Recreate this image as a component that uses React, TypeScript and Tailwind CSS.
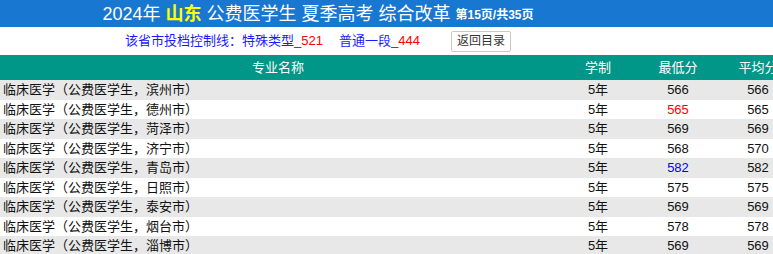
import React from 'react';

const rows = [
    { city: '滨州市', min: '566', avg: '566' },
    { city: '德州市', min: '565', avg: '565', minColor: 'text-[#ff0000]' },
    { city: '菏泽市', min: '569', avg: '569' },
    { city: '济宁市', min: '568', avg: '570' },
    { city: '青岛市', min: '582', avg: '582', minColor: 'text-[#0000ff]' },
    { city: '日照市', min: '575', avg: '575' },
    { city: '泰安市', min: '569', avg: '569' },
    { city: '烟台市', min: '578', avg: '578' },
    { city: '淄博市', min: '569', avg: '569' },
];

export default function App() {
    return (
        <div
            className="w-[773px] h-[254px] overflow-hidden bg-white text-[13px] text-[#111]"
            style={{ fontFamily: '"Liberation Sans", "Noto Sans CJK SC", sans-serif' }}
        >
            {/* title bar */}
            <div className="h-[27px] bg-[#1877d1]">
                <div className="w-[636px] h-full flex items-center justify-center text-white">
                    <span className="text-[18px] leading-none">
                        2024年 <b className="text-[#ffff00]">山东</b> 公费医学生 夏季高考 综合改革
                    </span>
                    <span className="ml-[5px] text-[12px] font-bold leading-none mt-[2px]">第15页/共35页</span>
                </div>
            </div>

            {/* control line */}
            <div className="h-[28px] w-[636px] flex items-center justify-center text-[#1a1aff]">
                <span>
                    该省市投档控制线：特殊类型_<span className="text-[#ff0000]">521</span>
                    <span className="inline-block w-[16px]"></span>
                    普通一段_<span className="text-[#ff0000]">444</span>
                </span>
                <button className="ml-[31px] w-[60px] h-[21px] border border-[#c8c8c8] rounded-[2px] bg-white text-[12px] text-[#333] leading-none">
                    返回目录
                </button>
            </div>

            {/* table */}
            <div className="w-[800px]">
                <div className="h-[25px] bg-[#009688] text-white flex items-center">
                    <div className="w-[556px] text-center">专业名称</div>
                    <div className="w-[84px] text-center">学制</div>
                    <div className="w-[76px] text-center">最低分</div>
                    <div className="w-[84px] text-center">平均分</div>
                </div>
                {rows.map((r, i) => (
                    <div
                        key={r.city}
                        className={`h-[19.5px] flex items-center ${i % 2 === 0 ? 'bg-[#e8e8e8]' : 'bg-white'}`}
                    >
                        <div className="w-[556px] pl-[3px]">临床医学（公费医学生，{r.city}）</div>
                        <div className="w-[84px] text-center">5年</div>
                        <div className={`w-[76px] text-center ${r.minColor ?? ''}`}>{r.min}</div>
                        <div className="w-[84px] text-center">{r.avg}</div>
                    </div>
                ))}
            </div>
        </div>
    );
}
